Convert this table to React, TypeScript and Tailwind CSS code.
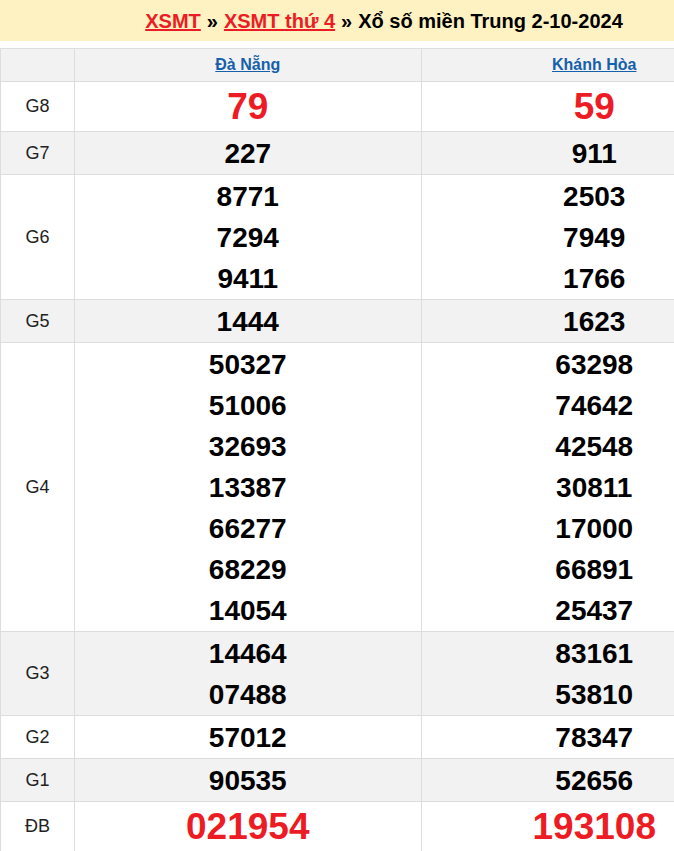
const rows: { label: string; a: string[]; b: string[]; big?: boolean }[] = [
  { label: "G8", a: ["79"], b: ["59"], big: true },
  { label: "G7", a: ["227"], b: ["911"] },
  { label: "G6", a: ["8771", "7294", "9411"], b: ["2503", "7949", "1766"] },
  { label: "G5", a: ["1444"], b: ["1623"] },
  {
    label: "G4",
    a: ["50327", "51006", "32693", "13387", "66277", "68229", "14054"],
    b: ["63298", "74642", "42548", "30811", "17000", "66891", "25437"],
  },
  { label: "G3", a: ["14464", "07488"], b: ["83161", "53810"] },
  { label: "G2", a: ["57012"], b: ["78347"] },
  { label: "G1", a: ["90535"], b: ["52656"] },
  { label: "ĐB", a: ["021954"], b: ["193108"], big: true },
];

function Cell({ nums, big }: { nums: string[]; big?: boolean }) {
  return (
    <td className={"border border-[#dddddd] text-center " + (big ? "py-px" : "pt-px pb-0")}>
      {nums.map((n) => (
        <div
          key={n}
          className={
            big
              ? "text-[37px] leading-[47px] font-bold text-[#ed1c24]"
              : "text-[28px] leading-[41px] font-bold text-black"
          }
        >
          {n}
        </div>
      ))}
    </td>
  );
}

export default function App() {
  return (
    <div className="w-[768px] bg-white font-['Liberation_Sans',Arial,sans-serif]">
      <div className="bg-[#fff2c2] h-[41px] flex items-center justify-center text-[20px] font-bold text-black">
        <a className="text-[#ed1c24] underline" href="#">XSMT</a>
        <span className="mx-[6px]">»</span>
        <a className="text-[#ed1c24] underline" href="#">XSMT thứ 4</a>
        <span className="mx-[6px]">»</span>
        <span>Xổ số miền Trung 2-10-2024</span>
      </div>
      <div className="h-[7px]" />
      <table className="w-full border-collapse table-fixed">
        <colgroup>
          <col className="w-[74px]" />
          <col />
          <col />
        </colgroup>
        <tbody>
          <tr className="bg-[#f2f2f2] h-[33px]">
            <td className="border border-[#dddddd] p-0" />
            <td className="border border-[#dddddd] p-0 text-center">
              <a className="text-[16px] font-bold text-[#1560aa] underline" href="#">Đà Nẵng</a>
            </td>
            <td className="border border-[#dddddd] p-0 text-center">
              <a className="text-[16px] font-bold text-[#1560aa] underline" href="#">Khánh Hòa</a>
            </td>
          </tr>
          {rows.map((r, i) => (
            <tr key={r.label} className={i % 2 === 1 ? "bg-[#f2f2f2]" : "bg-white"}>
              <td className="border border-[#dddddd] p-0 text-center text-[18px] text-[#222222]">{r.label}</td>
              <Cell nums={r.a} big={r.big} />
              <Cell nums={r.b} big={r.big} />
            </tr>
          ))}
        </tbody>
      </table>
    </div>
  );
}
